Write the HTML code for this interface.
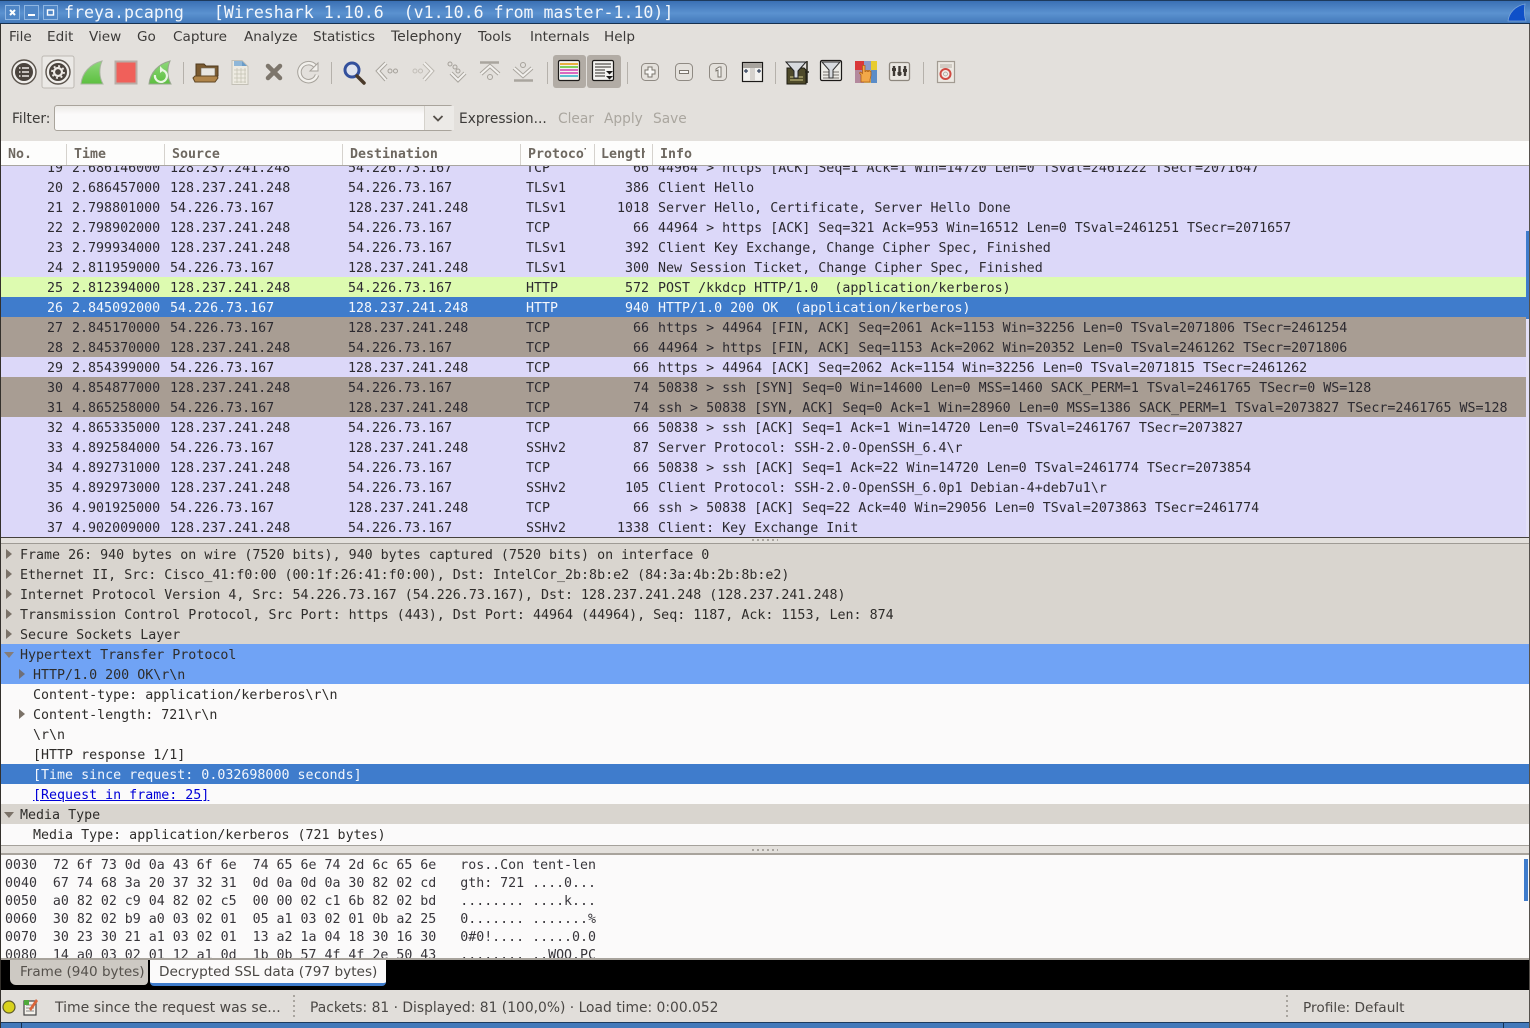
<!DOCTYPE html>
<html><head><meta charset="utf-8"><title>freya.pcapng</title>
<style>
html,body{margin:0;padding:0;width:1530px;height:1028px;overflow:hidden;background:#e3e0dc}
body{position:relative;font-family:"DejaVu Sans","Liberation Sans",sans-serif;font-size:13.33px;color:#3c3a38}
.a{position:absolute;white-space:pre}
#title{left:0;top:0;width:1530px;height:24px;background:linear-gradient(#3a70b4,#5b92d0 55%,#4379ba);border-top:1px solid #1d3a5c;border-bottom:1px solid #16304f;box-sizing:border-box;white-space:normal}
.wb{position:absolute;top:4px;width:15px;height:15px;background:#4f86c6;border:1px solid #8fb6e2;box-sizing:border-box}
#tt{left:64px;top:2px;color:#f2f6fb;font-family:"DejaVu Sans Mono",monospace;font-size:16.6px;line-height:21px}
.menu{top:27px;line-height:18px;font-size:13.6px;padding-top:1px}
.hd{top:147px;line-height:16px;font-weight:bold;color:#6e6860;font-family:"DejaVu Sans Mono",monospace;font-size:13.288px}
.hs{position:absolute;top:144px;width:1px;height:21px;background:#d5d2cd}
#list{left:1px;top:166px;width:1528px;height:371px;overflow:hidden;background:#dcd8f9;white-space:normal}
#inner{margin-top:-9px}
.r{height:20px;line-height:20px;position:relative;font-family:"DejaVu Sans Mono",monospace;font-size:13.32px;color:#2c2a30;white-space:pre}
.r span{position:absolute;top:2px}
.n{right:1466px}.t{left:71px}.s{left:169px}.d{left:347px}.p{left:525px}.l{right:880px}.i{left:657px}
.g{background:#ddfbb0}.sel{background:#3f7ccc;color:#f4f7fc}.b{background:#a89d93}
#tree{left:1px;top:544px;width:1528px;height:301px;background:#fbfafa;overflow:hidden;white-space:normal}
.e{height:20px;line-height:24px;position:relative;font-family:"DejaVu Sans Mono",monospace;font-size:13.32px;color:#2e2c2a;white-space:pre;padding-left:19px}
.e.c{padding-left:32px}
.e.h{background:#d9d5cf}.e.hi{background:#70a3f5}.e.se{background:#3f7ccc;color:#f2f6fc}
.e i{position:absolute;left:5px;top:5px;width:0;height:0;border-left:6px solid #7b7268;border-top:5px solid transparent;border-bottom:5px solid transparent}
.e.c i{left:18px}
.e i.o{left:3px;top:8px;border-top:6px solid #7b7268;border-left:5px solid transparent;border-right:5px solid transparent;border-bottom:0}
.e.hi i{border-left-color:#6f6f78}.e.hi i.o{border-left-color:transparent;border-top-color:#857c78}
a{color:#0000d8;text-decoration:underline}
#hex{left:1px;top:855px;width:1528px;height:103px;background:#fbfafa;overflow:hidden;white-space:normal}
#hex div{position:absolute;left:4px;line-height:18px;height:18px;font-family:"DejaVu Sans Mono",monospace;font-size:13.288px;color:#37353a;white-space:pre}
.dots{position:absolute;width:2px;background:repeating-linear-gradient(#a9a59f 0 2px,transparent 2px 5px)}
.st{top:999px;line-height:18px;color:#4a4744;font-size:13.85px}
.ft{top:110px;line-height:18px;font-size:13.75px}
</style></head>
<body>
<div class="a" id="title">
<div class="wb" style="left:5px"><svg width="13" height="13" style="display:block"><path d="M4 4L9 9M9 4L4 9" stroke="#fff" stroke-width="2"/></svg></div>
<div class="wb" style="left:24px"><svg width="13" height="13" style="display:block"><path d="M3 9H10" stroke="#fff" stroke-width="2"/></svg></div>
<div class="wb" style="left:43px"><svg width="13" height="13" style="display:block"><rect x="3.5" y="4" width="6" height="5" fill="none" stroke="#fff" stroke-width="1.4"/></svg></div>
</div>
<div class="a" id="tt">freya.pcapng   [Wireshark 1.10.6  (v1.10.6 from master-1.10)]</div>

<div class="a menu" style="left:9px">File</div>
<div class="a menu" style="left:47px">Edit</div>
<div class="a menu" style="left:89px">View</div>
<div class="a menu" style="left:137px">Go</div>
<div class="a menu" style="left:173px">Capture</div>
<div class="a menu" style="left:244px">Analyze</div>
<div class="a menu" style="left:313px">Statistics</div>
<div class="a menu" style="left:391px;font-size:14px">Telephony</div>
<div class="a menu" style="left:478px">Tools</div>
<div class="a menu" style="left:530px">Internals</div>
<div class="a menu" style="left:604px">Help</div>

<svg class="a" style="left:0;top:50px" width="1000" height="45" viewBox="0 50 1000 45">
<defs><linearGradient id="fg" x1="0" y1="0" x2="0" y2="1"><stop offset="0" stop-color="#8ed87a"/><stop offset="1" stop-color="#5cbf3f"/></linearGradient></defs>
<rect x="42" y="56" width="32" height="32" rx="2" fill="#ebe9e6" stroke="#bdb9b3"/>
<rect x="553" y="55" width="33" height="33" rx="3" fill="#b2aca5"/>
<rect x="587" y="55" width="34" height="33" rx="3" fill="#b2aca5"/>
<g stroke="#b5b1ab"><path d="M183.500 62V84M331.500 62V84M547.500 62V84M627.500 62V84M775.500 62V84M923.500 62V84"/></g>
<circle cx="24" cy="72" r="12" fill="#f1efec" stroke="#5a534c" stroke-width="1.400"/>
<circle cx="24" cy="72" r="9" fill="#4b443e"/>
<path d="M19 68h1.500M22 68h7M19 72h1.500M22 72h7M19 76h1.500M22 76h7" stroke="#eeeae6" stroke-width="1.500"/>
<circle cx="58" cy="72" r="12" fill="#f1efec" stroke="#5a534c" stroke-width="1.400"/>
<circle cx="58" cy="72" r="9" fill="#4b443e"/>
<circle cx="58" cy="72" r="4" fill="none" stroke="#eeeae6" stroke-width="2.200"/>
<circle cx="58" cy="72" r="6" fill="none" stroke="#eeeae6" stroke-width="1.800" stroke-dasharray="2 2.700"/>
<path d="M81 84C82 73 90 64 102 61C99 68 99 77 103 84Z" fill="url(#fg)" stroke="#a9b5a0"/>
<rect x="115.500" y="61.500" width="21" height="22" fill="#f0605a" stroke="#b9aca6" stroke-width="2"/>
<path d="M149 84C150 73 158 64 170 61C167 68 167 77 171 84Z" fill="url(#fg)" stroke="#99a690"/>
<path d="M155 75a6 6 0 1 0 5-5" fill="none" stroke="#eaf6e4" stroke-width="2.200"/>
<path d="M160 66l4 4-4 3z" fill="#eaf6e4"/>
<path d="M196 64h8l2 2h12v10h-22z" fill="#7a5a30" stroke="#4f3a1e"/>
<rect x="201" y="68" width="14" height="8" fill="#e8e6e0" stroke="#6f675a" stroke-width=".6"/>
<path d="M195 76h22l1 2-3 4h-20l-2-4z" fill="#b0854a" stroke="#5f4624"/>
<path d="M232 60.500h10l6 6v18h-16z" fill="#eeebe2" stroke="#c3c0b6"/>
<path d="M234 61h8v5h-8z" fill="#8fb7d8"/><path d="M242 61l5 5h-5z" fill="#6a9cc8"/>
<path d="M234 70h12M234 74h12M234 78h12M234 82h12M237 68v15M241 68v15M245 68v15" stroke="#c5c3b4" stroke-width=".8"/>
<path d="M268 66L280 78M280 66L268 78" stroke="#7d766c" stroke-width="4.500" stroke-linecap="round"/>
<path d="M315 66a9 9 0 1 0 2 9" fill="none" stroke="#a6a29b" stroke-width="4.500"/>
<path d="M315 66a9 9 0 1 0 2 9" fill="none" stroke="#f2f0ec" stroke-width="2.500"/>
<path d="M310 71h8v-8z" fill="#f2f0ec" stroke="#a6a29b"/>
<circle cx="352" cy="70" r="7" fill="#dfe3ee" stroke="#33509c" stroke-width="3"/>
<path d="M357 76L364 83" stroke="#4a3a2a" stroke-width="3.500" stroke-linecap="round"/>
<path d="M386 63L378 71L386 80" fill="none" stroke="#a9a59e" stroke-width="4"/><path d="M386 63L378 71L386 80" fill="none" stroke="#f2f0ed" stroke-width="2"/>
<circle cx="390" cy="71" r="2" fill="none" stroke="#a5a19a"/><circle cx="395.500" cy="71" r="2" fill="none" stroke="#a5a19a"/>
<path d="M424 63L432 71L424 80" fill="none" stroke="#bbb7b0" stroke-width="4"/><path d="M424 63L432 71L424 80" fill="none" stroke="#f2f0ed" stroke-width="2"/>
<circle cx="415" cy="71" r="2" fill="none" stroke="#c2beb8"/><circle cx="420.500" cy="71" r="2" fill="none" stroke="#c2beb8"/>
<circle cx="450" cy="64" r="2" fill="none" stroke="#a5a19a"/><circle cx="455" cy="67" r="2" fill="none" stroke="#a5a19a"/><circle cx="458" cy="71" r="2" fill="none" stroke="#a5a19a"/>
<path d="M451 73L458 80L465 73" fill="none" stroke="#a9a59e" stroke-width="4"/><path d="M451 73L458 80L465 73" fill="none" stroke="#f2f0ed" stroke-width="2"/>
<path d="M480 62.500h19" stroke="#a9a59e" stroke-width="2.500"/>
<path d="M481 74L490 66L499 74" fill="none" stroke="#a9a59e" stroke-width="4"/><path d="M481 74L490 66L499 74" fill="none" stroke="#f2f0ed" stroke-width="2"/>
<circle cx="490" cy="77" r="2.500" fill="none" stroke="#a5a19a"/>
<path d="M514 80.500h19" stroke="#a9a59e" stroke-width="2.500"/>
<path d="M514 68L523 76L532 68" fill="none" stroke="#a9a59e" stroke-width="4"/><path d="M514 68L523 76L532 68" fill="none" stroke="#f2f0ed" stroke-width="2"/>
<circle cx="523" cy="65" r="2.500" fill="none" stroke="#a5a19a"/>
<rect x="558.500" y="60.500" width="21" height="20" rx="1.500" fill="#f4f3f0" stroke="#1c1a18" stroke-width="1.200"/>
<path d="M560 64h18" stroke="#e8b040" stroke-width="2"/><path d="M560 67h18" stroke="#7fcf5a" stroke-width="2"/><path d="M560 70h18" stroke="#d86ac0" stroke-width="2"/><path d="M560 73h18" stroke="#d86ac0" stroke-width="2"/><path d="M560 76h18" stroke="#5ac0d0" stroke-width="2"/>
<rect x="592.500" y="60.500" width="21" height="20" rx="1.500" fill="#f4f3f0" stroke="#1c1a18" stroke-width="1.200"/>
<path d="M595 64h16M595 67h16M595 70h10M595 73h10M595 76h10" stroke="#55514d" stroke-width="1.200"/>
<path d="M606 71h7l-3.500 3.500zM606 76h7l-3.500 3.500z" fill="#1c1a18"/>
<g fill="#e4e1dc" stroke="#8f8a83"><rect x="641.500" y="63.500" width="17" height="17" rx="4"/><rect x="675.500" y="63.500" width="17" height="17" rx="4"/><rect x="709.500" y="63.500" width="17" height="17" rx="4"/></g>
<path d="M648 67h4v3h3v4h-3v3h-4v-3h-3v-4h3z" fill="#f7f6f4" stroke="#7a756d"/>
<rect x="679.500" y="70.500" width="9" height="3" fill="#f7f6f4" stroke="#7a756d"/>
<path d="M716 69l3-2h2v10h-3v-7l-2 1z" fill="#f7f6f4" stroke="#7a756d"/>
<rect x="742.500" y="62.500" width="20" height="19" fill="#f3f2ef" stroke="#1c1a18" stroke-width="1.200"/>
<path d="M743 63h19v5h-19z" fill="#a8a49e"/><path d="M750 68h5v13h-5z" fill="#d5d2cd"/>
<path d="M744 71h4M746 69v4M757 71h4M759 69v4" stroke="#30405a" stroke-width="1.200"/>
<path d="M787 68h17l2 2v14h-19z" fill="#4e4a2a" stroke="#1e1c12"/>
<path d="M790 77h13M790 80h13" stroke="#a5a06a" stroke-width="1.600"/>
<path d="M807 61v22M805 72h4" stroke="#26241a" stroke-width="1.500"/>
<path d="M786 62h20l-8 9v7h-4v-7z" fill="#d7dade" stroke="#222"/>
<rect x="820.500" y="60.500" width="21" height="20" rx="1.500" fill="#ecebe6" stroke="#1c1a18" stroke-width="1.200"/>
<path d="M823 72h6M823 75h6M823 78h6M833 72h6M833 75h6M833 78h6" stroke="#77736e"/>
<path d="M822 62h18l-7 8v8h-4v-8z" fill="#d7dade" stroke="#333"/>
<rect x="855" y="61" width="22" height="22" fill="#d2c33a"/>
<rect x="855" y="61" width="9" height="9" fill="#d93838"/><rect x="864" y="61" width="7" height="9" fill="#8c9bc8"/><rect x="871" y="61" width="6" height="9" fill="#e8cc30"/>
<rect x="855" y="70" width="9" height="13" fill="#b3899d"/><rect x="864" y="70" width="7" height="13" fill="#d8c070"/><rect x="871" y="70" width="6" height="13" fill="#5a8cc8"/>
<path d="M861 82v-7l-1.500-2 1-1 2 1.500v-8h2.500v6h1v-1h1.500v1h1v-1h1.500v1h1v4l-1 4v2.500z" fill="#f2a848" stroke="#b06018" stroke-width=".8"/>
<rect x="889.500" y="62.500" width="20" height="18" rx="2" fill="#e9e6e1" stroke="#8d877e" stroke-width="1.300"/>
<path d="M894 66v10M899.500 66v10M905 66v10" stroke="#3f3a35" stroke-width="2.400"/>
<rect x="892" y="68" width="4" height="3" fill="#3f3a35"/><rect x="897.500" y="72" width="4" height="3" fill="#3f3a35"/><rect x="903" y="69" width="4" height="3" fill="#3f3a35"/>
<rect x="937.500" y="61.500" width="17" height="21" fill="#ede9e3" stroke="#a29b92" stroke-width="1.200"/>
<path d="M940 65h12M940 67h12" stroke="#b5aea5"/>
<circle cx="945.500" cy="74" r="5" fill="#f4ece8" stroke="#d04a42" stroke-width="2"/>
<circle cx="945.500" cy="74" r="2" fill="#ede9e3" stroke="#a29b92" stroke-width=".7"/>
</svg>

<div class="a ft" style="left:12px">Filter:</div>
<div class="a" style="left:54px;top:105px;width:399px;height:26px;box-sizing:border-box;border:1px solid #a9a49c;border-radius:3px;background:linear-gradient(#eceae7,#fbfafa 35%);white-space:normal">
<div style="position:absolute;left:369px;top:0;width:29px;height:24px;border-left:1px solid #d5d2cc;background:#eceae7"></div>
<svg style="position:absolute;left:376px;top:8px" width="14" height="10"><path d="M2.500 2L7 6.500L11.500 2" fill="none" stroke="#55504a" stroke-width="1.800"/></svg>
</div>
<div class="a ft" style="left:459px">Expression...</div>
<div class="a ft" style="left:558px;color:#aaa69f">Clear</div>
<div class="a ft" style="left:604px;color:#aaa69f">Apply</div>
<div class="a ft" style="left:653px;color:#aaa69f">Save</div>

<div class="a" style="left:0;top:141px;width:1530px;height:25px;background:#fdfdfc;border-bottom:1px solid #a9a6a1;box-sizing:border-box"></div>
<div class="hs" style="left:66px"></div><div class="hs" style="left:164px"></div><div class="hs" style="left:342px"></div><div class="hs" style="left:520px"></div><div class="hs" style="left:594px"></div><div class="hs" style="left:652px"></div>
<div class="a hd" style="left:8px">No.</div>
<div class="a hd" style="left:74px">Time</div>
<div class="a hd" style="left:172px">Source</div>
<div class="a hd" style="left:350px">Destination</div>
<div class="a hd" style="left:528px;width:58px;overflow:hidden">Protocol</div>
<div class="a hd" style="left:601px;width:44px;overflow:hidden">Length</div>
<div class="a hd" style="left:660px">Info</div>

<div class="a" id="list"><div id="inner"><div class="r"><span class="n">19</span><span class="t">2.686146000</span><span class="s">128.237.241.248</span><span class="d">54.226.73.167</span><span class="p">TCP</span><span class="l">66</span><span class="i">44964 &gt; https [ACK] Seq=1 Ack=1 Win=14720 Len=0 TSval=2461222 TSecr=2071647</span></div>
<div class="r"><span class="n">20</span><span class="t">2.686457000</span><span class="s">128.237.241.248</span><span class="d">54.226.73.167</span><span class="p">TLSv1</span><span class="l">386</span><span class="i">Client Hello</span></div>
<div class="r"><span class="n">21</span><span class="t">2.798801000</span><span class="s">54.226.73.167</span><span class="d">128.237.241.248</span><span class="p">TLSv1</span><span class="l">1018</span><span class="i">Server Hello, Certificate, Server Hello Done</span></div>
<div class="r"><span class="n">22</span><span class="t">2.798902000</span><span class="s">128.237.241.248</span><span class="d">54.226.73.167</span><span class="p">TCP</span><span class="l">66</span><span class="i">44964 &gt; https [ACK] Seq=321 Ack=953 Win=16512 Len=0 TSval=2461251 TSecr=2071657</span></div>
<div class="r"><span class="n">23</span><span class="t">2.799934000</span><span class="s">128.237.241.248</span><span class="d">54.226.73.167</span><span class="p">TLSv1</span><span class="l">392</span><span class="i">Client Key Exchange, Change Cipher Spec, Finished</span></div>
<div class="r"><span class="n">24</span><span class="t">2.811959000</span><span class="s">54.226.73.167</span><span class="d">128.237.241.248</span><span class="p">TLSv1</span><span class="l">300</span><span class="i">New Session Ticket, Change Cipher Spec, Finished</span></div>
<div class="r g"><span class="n">25</span><span class="t">2.812394000</span><span class="s">128.237.241.248</span><span class="d">54.226.73.167</span><span class="p">HTTP</span><span class="l">572</span><span class="i">POST /kkdcp HTTP/1.0  (application/kerberos)</span></div>
<div class="r sel"><span class="n">26</span><span class="t">2.845092000</span><span class="s">54.226.73.167</span><span class="d">128.237.241.248</span><span class="p">HTTP</span><span class="l">940</span><span class="i">HTTP/1.0 200 OK  (application/kerberos)</span></div>
<div class="r b"><span class="n">27</span><span class="t">2.845170000</span><span class="s">54.226.73.167</span><span class="d">128.237.241.248</span><span class="p">TCP</span><span class="l">66</span><span class="i">https &gt; 44964 [FIN, ACK] Seq=2061 Ack=1153 Win=32256 Len=0 TSval=2071806 TSecr=2461254</span></div>
<div class="r b"><span class="n">28</span><span class="t">2.845370000</span><span class="s">128.237.241.248</span><span class="d">54.226.73.167</span><span class="p">TCP</span><span class="l">66</span><span class="i">44964 &gt; https [FIN, ACK] Seq=1153 Ack=2062 Win=20352 Len=0 TSval=2461262 TSecr=2071806</span></div>
<div class="r"><span class="n">29</span><span class="t">2.854399000</span><span class="s">54.226.73.167</span><span class="d">128.237.241.248</span><span class="p">TCP</span><span class="l">66</span><span class="i">https &gt; 44964 [ACK] Seq=2062 Ack=1154 Win=32256 Len=0 TSval=2071815 TSecr=2461262</span></div>
<div class="r b"><span class="n">30</span><span class="t">4.854877000</span><span class="s">128.237.241.248</span><span class="d">54.226.73.167</span><span class="p">TCP</span><span class="l">74</span><span class="i">50838 &gt; ssh [SYN] Seq=0 Win=14600 Len=0 MSS=1460 SACK_PERM=1 TSval=2461765 TSecr=0 WS=128</span></div>
<div class="r b"><span class="n">31</span><span class="t">4.865258000</span><span class="s">54.226.73.167</span><span class="d">128.237.241.248</span><span class="p">TCP</span><span class="l">74</span><span class="i">ssh &gt; 50838 [SYN, ACK] Seq=0 Ack=1 Win=28960 Len=0 MSS=1386 SACK_PERM=1 TSval=2073827 TSecr=2461765 WS=128</span></div>
<div class="r"><span class="n">32</span><span class="t">4.865335000</span><span class="s">128.237.241.248</span><span class="d">54.226.73.167</span><span class="p">TCP</span><span class="l">66</span><span class="i">50838 &gt; ssh [ACK] Seq=1 Ack=1 Win=14720 Len=0 TSval=2461767 TSecr=2073827</span></div>
<div class="r"><span class="n">33</span><span class="t">4.892584000</span><span class="s">54.226.73.167</span><span class="d">128.237.241.248</span><span class="p">SSHv2</span><span class="l">87</span><span class="i">Server Protocol: SSH-2.0-OpenSSH_6.4\r</span></div>
<div class="r"><span class="n">34</span><span class="t">4.892731000</span><span class="s">128.237.241.248</span><span class="d">54.226.73.167</span><span class="p">TCP</span><span class="l">66</span><span class="i">50838 &gt; ssh [ACK] Seq=1 Ack=22 Win=14720 Len=0 TSval=2461774 TSecr=2073854</span></div>
<div class="r"><span class="n">35</span><span class="t">4.892973000</span><span class="s">128.237.241.248</span><span class="d">54.226.73.167</span><span class="p">SSHv2</span><span class="l">105</span><span class="i">Client Protocol: SSH-2.0-OpenSSH_6.0p1 Debian-4+deb7u1\r</span></div>
<div class="r"><span class="n">36</span><span class="t">4.901925000</span><span class="s">54.226.73.167</span><span class="d">128.237.241.248</span><span class="p">TCP</span><span class="l">66</span><span class="i">ssh &gt; 50838 [ACK] Seq=22 Ack=40 Win=29056 Len=0 TSval=2073863 TSecr=2461774</span></div>
<div class="r"><span class="n">37</span><span class="t">4.902009000</span><span class="s">128.237.241.248</span><span class="d">54.226.73.167</span><span class="p">SSHv2</span><span class="l">1338</span><span class="i">Client: Key Exchange Init</span></div>
</div></div>
<div class="a" style="left:1526px;top:231px;width:3px;height:306px;background:#e3e0f8"></div>
<div class="a" style="left:1526px;top:231px;width:3px;height:88px;background:#3f7ccc"></div>

<div class="a" style="left:0;top:537px;width:1530px;height:1px;background:#45413c"></div>
<div class="a" style="left:0;top:543px;width:1530px;height:1px;background:#9f9b95"></div>
<div class="a" style="left:752px;top:539px;width:26px;height:2px;background:repeating-linear-gradient(90deg,#a9a59f 0 2px,transparent 2px 5px)"></div>

<div class="a" id="tree"><div class="e h"><i></i>Frame 26: 940 bytes on wire (7520 bits), 940 bytes captured (7520 bits) on interface 0</div>
<div class="e h"><i></i>Ethernet II, Src: Cisco_41:f0:00 (00:1f:26:41:f0:00), Dst: IntelCor_2b:8b:e2 (84:3a:4b:2b:8b:e2)</div>
<div class="e h"><i></i>Internet Protocol Version 4, Src: 54.226.73.167 (54.226.73.167), Dst: 128.237.241.248 (128.237.241.248)</div>
<div class="e h"><i></i>Transmission Control Protocol, Src Port: https (443), Dst Port: 44964 (44964), Seq: 1187, Ack: 1153, Len: 874</div>
<div class="e h"><i></i>Secure Sockets Layer</div>
<div class="e hi"><i class="o"></i>Hypertext Transfer Protocol</div>
<div class="e c hi"><i></i>HTTP/1.0 200 OK\r\n</div>
<div class="e c">Content-type: application/kerberos\r\n</div>
<div class="e c"><i></i>Content-length: 721\r\n</div>
<div class="e c">\r\n</div>
<div class="e c">[HTTP response 1/1]</div>
<div class="e c se">[Time since request: 0.032698000 seconds]</div>
<div class="e c"><a>[Request in frame: 25]</a></div>
<div class="e h"><i class="o"></i>Media Type</div>
<div class="e c">Media Type: application/kerberos (721 bytes)</div>
</div>

<div class="a" style="left:0;top:845px;width:1530px;height:1px;background:#a5a19b"></div>
<div class="a" style="left:0;top:853px;width:1530px;height:2px;background:#a8a39c"></div>
<div class="a" style="left:752px;top:849px;width:26px;height:2px;background:repeating-linear-gradient(90deg,#a9a59f 0 2px,transparent 2px 5px)"></div>

<div class="a" id="hex">
<div style="top:2px">0030  72 6f 73 0d 0a 43 6f 6e  74 65 6e 74 2d 6c 65 6e   ros..Con tent-len</div>
<div style="top:20px">0040  67 74 68 3a 20 37 32 31  0d 0a 0d 0a 30 82 02 cd   gth: 721 ....0...</div>
<div style="top:38px">0050  a0 82 02 c9 04 82 02 c5  00 00 02 c1 6b 82 02 bd   ........ ....k...</div>
<div style="top:56px">0060  30 82 02 b9 a0 03 02 01  05 a1 03 02 01 0b a2 25   0....... .......%</div>
<div style="top:74px">0070  30 23 30 21 a1 03 02 01  13 a2 1a 04 18 30 16 30   0#0!.... .....0.0</div>
<div style="top:92px">0080  14 a0 03 02 01 12 a1 0d  1b 0b 57 4f 4f 2e 50 43   ........ ..WOO.PC</div>
</div>
<div class="a" style="left:1524px;top:859px;width:4px;height:42px;background:#3f7ccc"></div>
<div class="a" style="left:0;top:958px;width:1530px;height:2px;background:#a8a39c"></div>

<div class="a" style="left:0;top:960px;width:1530px;height:30px;background:#000"></div>
<div class="a" style="left:10px;top:960px;width:138px;height:25px;background:#cdc9c3;border-radius:0 0 4px 6px;line-height:24px;font-size:13.55px;color:#55514c;padding-left:10px;box-sizing:border-box">Frame (940 bytes)</div>
<div class="a" style="left:150px;top:960px;width:236px;height:26px;background:#fbfafa;border-bottom:3px solid #3f7ccc;border-radius:0 0 4px 4px;line-height:24px;font-size:13.65px;color:#4a4744;padding-left:9px;box-sizing:border-box">Decrypted SSL data (797 bytes)</div>

<div class="a" style="left:0;top:990px;width:1530px;height:32px;background:#e1deda"></div>
<svg class="a" style="left:0;top:994px" width="44" height="26">
<circle cx="9" cy="13" r="6" fill="#d8d21c" stroke="#5d5a2a" stroke-width="1.200"/>
<rect x="24" y="7" width="12" height="14" fill="#f4f2ec" stroke="#444" stroke-width="1.200"/>
<path d="M26 11h8M26 14h8M26 17h8" stroke="#888"/>
<path d="M29 15L36 5l2 2-7 10z" fill="#d9653a"/><path d="M24 6h5v5h-5z" fill="#4faa3a"/>
</svg>
<div class="a st" style="left:55px;font-size:14px">Time since the request was se...</div>
<div class="dots" style="left:293px;top:995px;height:25px"></div>
<div class="a st" style="left:310px">Packets: 81 · Displayed: 81 (100,0%) · Load time: 0:00.052</div>
<div class="dots" style="left:1286px;top:995px;height:25px"></div>
<div class="a st" style="left:1303px;font-size:13.7px">Profile: Default</div>

<div class="a" style="left:0;top:1022px;width:1530px;height:6px;background:#4379ba;border-top:1px solid #1d3a5c;box-sizing:border-box"></div>
<div class="a" style="left:21px;top:1023px;width:1px;height:5px;background:#16304f"></div>
<div class="a" style="left:1503px;top:1023px;width:1px;height:5px;background:#16304f"></div>

<div class="a" style="left:0;top:24px;width:1px;height:1004px;background:#33302c"></div>
<div class="a" style="left:1529px;top:24px;width:1px;height:1004px;background:#55514c"></div>

<svg class="a" style="left:1506px;top:3px" width="22" height="19"><path d="M2 18C3 10 9 3 19 1C18 7 18 13 20 18Z" fill="#0f50c8" stroke="#7ea6d8" stroke-width=".8"/></svg>
</body></html>
